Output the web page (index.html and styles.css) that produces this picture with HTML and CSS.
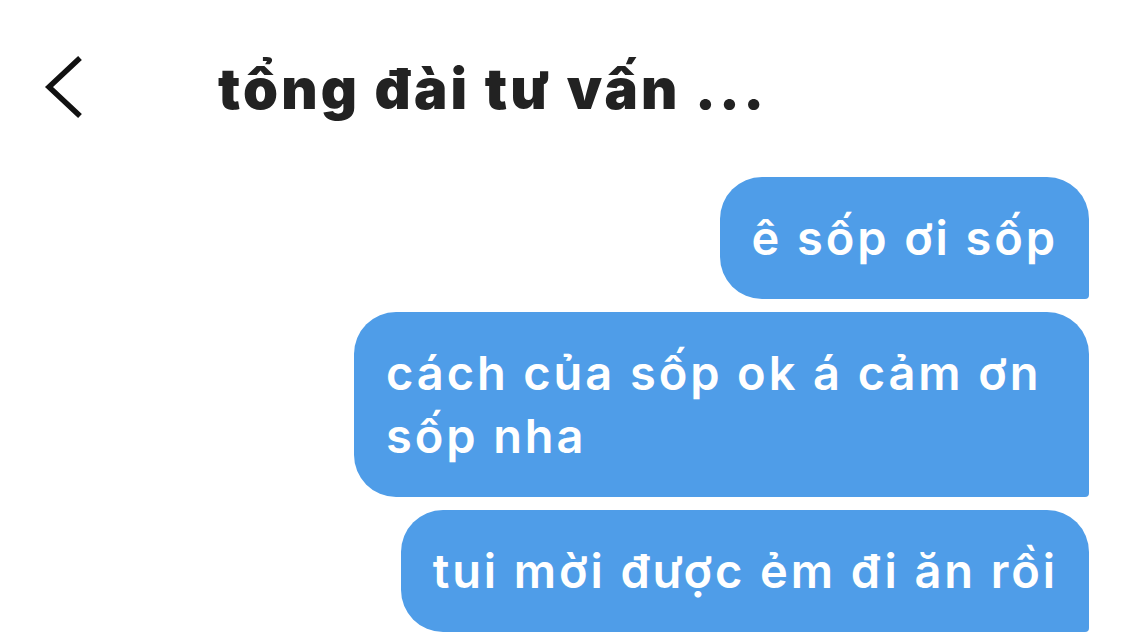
FILE: index.html
```html
<!DOCTYPE html>
<html lang="vi">
<head>
<meta charset="utf-8">
<link rel="stylesheet" href="styles.css">
</head>
<body>
<div class="screen">
  <header class="topbar">
    <button class="back" aria-label="Quay lại">
      <svg width="40" height="62" viewBox="0 0 40 62"><path d="M37 2 L6 31 L37 60" fill="none" stroke="#111" stroke-width="5.5"/></svg>
    </button>
    <h1 class="title">tổng đài tư vấn ...</h1>
  </header>
  <main class="thread">
    <div class="bubble">ê sốp ơi sốp</div>
    <div class="bubble">cách của sốp ok á cảm ơn sốp nha</div>
    <div class="bubble">tui mời được ẻm đi ăn rồi</div>
  </main>
</div>
</body>
</html>
```
FILE: styles.css
```css
html, body { margin: 0; padding: 0; background: #fff; }
body { font-family: "Inter", "Noto Sans", sans-serif; }
.screen { width: 1124px; height: 644px; overflow: hidden; }
.topbar { display: flex; align-items: center; height: 90px; padding-top: 42px; box-sizing: content-box; }
.back { border: 0; background: none; padding: 0; margin-left: 43px; width: 40px; height: 62px; display: flex; }
.title { margin: 0 0 0 135px; font-size: 56px; font-weight: 900; color: #222; letter-spacing: 3.2px; line-height: 1; padding-top: 4px; }
.thread { display: flex; flex-direction: column; align-items: flex-end; gap: 13px; padding-right: 35px; margin-top: 45px; }
.bubble { box-sizing: border-box; max-width: 735px; background: #4f9de8; color: #fff; font-size: 47px; font-weight: 600; letter-spacing: 2.9px; line-height: 63px; padding: 29px 31px 30px 32px; border-radius: 42px 42px 4px 42px; }
```
